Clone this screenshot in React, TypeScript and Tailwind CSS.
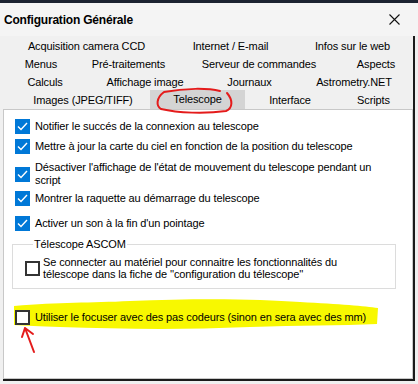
import React from "react";

const font = { fontFamily: '"Liberation Sans", Arial, sans-serif' };

type TabRow = { offset: number; tabs: { label: string; w: number; active?: boolean }[] };

const tabRows: TabRow[] = [
  {
    offset: 4,
    tabs: [
      { label: "Acquisition camera CCD", w: 165 },
      { label: "Internet / E-mail", w: 123 },
      { label: "Infos sur le web", w: 121 },
    ],
  },
  {
    offset: 4,
    tabs: [
      { label: "Menus", w: 74 },
      { label: "Pré-traitements", w: 101 },
      { label: "Serveur de commandes", w: 160 },
      { label: "Aspects", w: 74 },
    ],
  },
  {
    offset: 4,
    tabs: [
      { label: "Calculs", w: 82 },
      { label: "Affichage image", w: 118 },
      { label: "Journaux", w: 91 },
      { label: "Astrometry.NET", w: 118 },
    ],
  },
  {
    offset: 16,
    tabs: [
      { label: "Images (JPEG/TIFF)", w: 134 },
      { label: "Telescope", w: 95, active: true },
      { label: "Interface", w: 90 },
      { label: "Scripts", w: 77 },
    ],
  },
];

function Checkbox({ checked }: { checked?: boolean }) {
  if (checked) {
    return (
      <span className="flex h-[15px] w-[15px] shrink-0 items-center justify-center bg-[#0078d7]">
        <svg width="11" height="9" viewBox="0 0 11 9">
          <path d="M1 4.5 L4 7.5 L10 1" fill="none" stroke="#fff" strokeWidth="1.4" />
        </svg>
      </span>
    );
  }
  return <span className="block h-[15px] w-[15px] shrink-0 border-2 border-[#333333] bg-white" />;
}

function Option({ checked, children, className = "" }: { checked?: boolean; children: React.ReactNode; className?: string }) {
  return (
    <div className={`flex items-center gap-[5px] ${className}`}>
      <Checkbox checked={checked} />
      <span className="whitespace-nowrap leading-[13px]">{children}</span>
    </div>
  );
}

export default function App() {
  return (
    <div
      className="relative h-[384px] w-[418px] overflow-hidden bg-[#f0f0f0] text-[11px] tracking-[-0.12px] text-black"
      style={font}
    >
      <div className="h-[3px] bg-[#1c2331]" />

      {/* Title bar */}
      <div className="flex h-[33px] items-center justify-between bg-[#f4f4f4] pl-[4px] pr-[18px]">
        <span className="text-[12px] font-bold tracking-[-0.2px]">Configuration Générale</span>
        <svg width="11" height="11" viewBox="0 0 11 11">
          <path d="M0.5 0.5 L10.5 10.5 M10.5 0.5 L0.5 10.5" stroke="#111" strokeWidth="1.1" />
        </svg>
      </div>

      {/* Window body */}
      <div className="mx-[3px] flex h-[345px] flex-col border-b-2 border-r-2 border-[#1a1a1a]">
        <div className="flex flex-col pt-[1px]">
          {tabRows.map((row, i) => (
            <div key={i} className="flex h-[18px]" style={{ paddingLeft: row.offset - 3 }}>
              {row.tabs.map((t) => (
                <div
                  key={t.label}
                  className={`flex shrink-0 items-center justify-center whitespace-nowrap ${t.active ? "h-[19px] self-end bg-[#d4d4d4]" : ""}`}
                  style={{ width: t.w }}
                >
                  {t.label}
                </div>
              ))}
            </div>
          ))}
        </div>

        {/* Panel */}
        <div className="flex flex-1 flex-col border border-[#c8c8c8] bg-white pl-[11px] pr-[8px] pt-[9px]">
          <Option checked>Notifier le succés de la connexion au telescope</Option>
          <Option checked className="mt-[5px]">
            Mettre à jour la carte du ciel en fonction de la position du telescope
          </Option>
          <Option checked className="mt-[7px]">
            Désactiver l'affichage de l'état de mouvement du telescope pendant un
            <br />
            script
          </Option>
          <Option checked className="mt-[4px]">Montrer la raquette au démarrage du telescope</Option>
          <Option checked className="mt-[10px]">Activer un son à la fin d'un pointage</Option>

          {/* Group box */}
          <fieldset className="mr-[8px] ml-[-3px] mt-[6px] h-[52px] border border-[#dcdcdc] pl-[12px] pr-[8px]">
            <legend className="ml-[8px] px-[1px] leading-[14px]">Télescope ASCOM</legend>
            <div className="mt-[5px] flex items-center gap-[3px]">
              <Checkbox />
              <span className="whitespace-nowrap leading-[12px]">
                Se connecter au matériel pour connaitre les fonctionnalités du
                <br />
                télescope dans la fiche de ''configuration du télescope''
              </span>
            </div>
          </fieldset>

          <Option className="relative z-10 mt-[21px]">Utiliser le focuser avec des pas codeurs (sinon en sera avec des mm)</Option>
        </div>
      </div>

      {/* Annotations */}
      <svg className="pointer-events-none absolute left-0 top-0" width="418" height="384" viewBox="0 0 418 384">
        <path
          d="M14 306 C 60 302, 90 303, 130 301 C 200 298, 260 299, 300 302 C 340 304, 365 306, 378 308 L 377 324 C 340 326, 300 325, 250 327 C 180 330, 120 329, 60 327 C 40 326, 25 326, 14 325 Z"
          fill="#f8f800"
        />
      </svg>
      <svg className="pointer-events-none absolute left-0 top-0 z-30" width="418" height="384" viewBox="0 0 418 384">
        <path
          d="M164 92 C 185 88, 208 88, 220 91 M 227 93 C 233 100, 233 108, 226 111 C 205 114, 178 113, 161 109 C 156 106, 156 98, 164 92"
          fill="none"
          stroke="#e41b1b"
          strokeWidth="2"
          strokeLinecap="round"
        />
        <path
          d="M34 352 L 25 328 M 25 328 L 22 337 M 25 328 L 33 334"
          fill="none"
          stroke="#e41b1b"
          strokeWidth="2"
          strokeLinecap="round"
        />
      </svg>
    </div>
  );
}
